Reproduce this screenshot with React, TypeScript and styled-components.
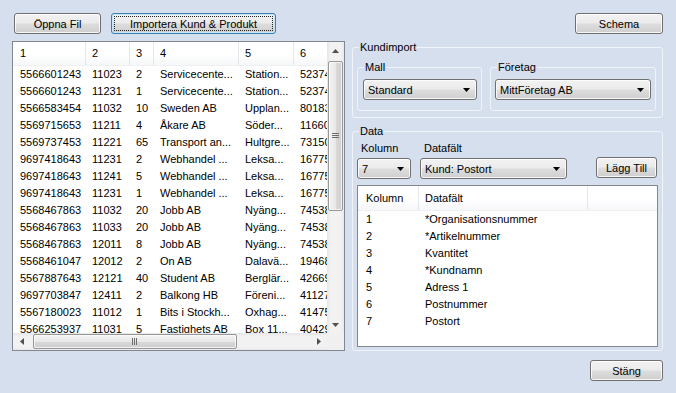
import React from "react";
import styled, { createGlobalStyle, css } from "styled-components";

const GlobalStyle = createGlobalStyle`
  html, body {
    margin: 0;
    padding: 0;
    background: #d6dfee;
  }
  body {
    font-family: "Liberation Sans", Arial, sans-serif;
    font-size: 11px;
    color: #000;
  }
  * {
    box-sizing: border-box;
  }
`;

type Col = { w?: number; pad?: number };

const importCols: Col[] = [{ w: 73, pad: 7 }, { w: 44 }, { w: 24 }, { w: 85 }, { w: 55 }, { w: 60 }];

const importRows = [
  ["5566601243", "11023", "2", "Servicecente...", "Station...", "52374"],
  ["5566601243", "11231", "1", "Servicecente...", "Station...", "52374"],
  ["5566583454", "11032", "10", "Sweden AB", "Upplan...", "80183"],
  ["5569715653", "11211", "4", "Åkare AB", "Söder...", "11660"],
  ["5569737453", "11221", "65", "Transport an...", "Hultgre...", "73150"],
  ["9697418643", "11231", "2", "Webhandel ...", "Leksa...", "16775"],
  ["9697418643", "11241", "5", "Webhandel ...", "Leksa...", "16775"],
  ["9697418643", "11231", "1", "Webhandel ...", "Leksa...", "16775"],
  ["5568467863", "11032", "20", "Jobb AB", "Nyäng...", "74538"],
  ["5568467863", "11033", "20", "Jobb AB", "Nyäng...", "74538"],
  ["5568467863", "12011", "8", "Jobb AB", "Nyäng...", "74538"],
  ["5568461047", "12012", "2", "On AB", "Dalavä...", "19468"],
  ["5567887643", "12121", "40", "Student AB", "Berglär...", "42669"],
  ["9697703847", "12411", "2", "Balkong HB", "Föreni...", "41127"],
  ["5567180023", "11012", "1", "Bits i Stockh...", "Oxhag...", "41475"],
  ["5566253937", "11031", "5", "Fastighets AB", "Box 11...", "40429"],
];

const mapCols: Col[] = [{ w: 61, pad: 8 }, { w: 169 }, {}];

const mapRows = [
  ["1", "*Organisationsnummer"],
  ["2", "*Artikelnummer"],
  ["3", "Kvantitet"],
  ["4", "*Kundnamn"],
  ["5", "Adress 1"],
  ["6", "Postnummer"],
  ["7", "Postort"],
];

const Arrow = ({ dir }: { dir: "up" | "down" | "left" | "right" }) => {
  const d = {
    up: "M0 4 L3.5 0 L7 4 Z",
    down: "M0 0 L7 0 L3.5 4 Z",
    left: "M4 0 L4 7 L0 3.5 Z",
    right: "M0 0 L4 3.5 L0 7 Z",
  }[dir];
  const vert = dir === "up" || dir === "down";
  return (
    <svg width={vert ? 7 : 4} height={vert ? 4 : 7} viewBox={vert ? "0 0 7 4" : "0 0 4 7"}>
      <path d={d} fill="#505050" />
    </svg>
  );
};

const ComboArrow = () => (
  <svg width="7" height="4" viewBox="0 0 7 4">
    <path d="M0 0 L7 0 L3.5 4 Z" fill="#000" />
  </svg>
);

const Grip = ({ vertical }: { vertical?: boolean }) =>
  vertical ? (
    <svg width="7" height="6" viewBox="0 0 7 6">
      <path d="M0 0.5 H7 M0 2.5 H7 M0 4.5 H7" stroke="#6d6d6d" strokeWidth="1" />
    </svg>
  ) : (
    <svg width="6" height="7" viewBox="0 0 6 7">
      <path d="M0.5 0 V7 M2.5 0 V7 M4.5 0 V7" stroke="#6d6d6d" strokeWidth="1" />
    </svg>
  );

export default function App() {
  return (
    <>
      <GlobalStyle />
      <Window>
        <TopBar>
          <Button $w={87}>Öppna Fil</Button>
          <Button $w={165} $focused>
            Importera Kund &amp; Produkt
          </Button>
          <Spacer />
          <Button $w={88}>Schema</Button>
        </TopBar>

        <Body>
          <ListFrame $w={333} $h={310}>
            <Viewport>
              <HeaderRow $h={24}>
                {importCols.map((c, i) => (
                  <HeaderCell key={i} $w={c.w} $pad={c.pad}>
                    {i + 1}
                  </HeaderCell>
                ))}
              </HeaderRow>
              {importRows.map((r, i) => (
                <Row key={i}>
                  {r.map((v, j) => (
                    <Cell key={j} $w={importCols[j].w} $pad={importCols[j].pad}>
                      {v}
                    </Cell>
                  ))}
                </Row>
              ))}
            </Viewport>
            <VScroll>
              <ArrowBox>
                <Arrow dir="up" />
              </ArrowBox>
              <Track $vertical>
                <Thumb $vertical $offset={2} $len={150}>
                  <Grip vertical />
                </Thumb>
              </Track>
              <ArrowBox>
                <Arrow dir="down" />
              </ArrowBox>
            </VScroll>
            <HScroll>
              <ArrowBox>
                <Arrow dir="left" />
              </ArrowBox>
              <Track>
                <Thumb $offset={3} $len={204}>
                  <Grip />
                </Thumb>
              </Track>
              <ArrowBox>
                <Arrow dir="right" />
              </ArrowBox>
            </HScroll>
            <Corner />
          </ListFrame>

          <Side>
            <Group $w={311} $h={77}>
              <GroupTitle>Kundimport</GroupTitle>
              <GroupBody $pad="7px 6px 0 4px" $row>
                <Group $w={125} $h={50}>
                  <GroupTitle>Mall</GroupTitle>
                  <GroupBody $pad="5px 0 0 5px">
                    <Combo $w={114}>
                      Standard
                      <ComboArrow />
                    </Combo>
                  </GroupBody>
                </Group>
                <Group $w={166} $h={50}>
                  <GroupTitle>Företag</GroupTitle>
                  <GroupBody $pad="5px 0 0 4px">
                    <Combo $w={156}>
                      MittFöretag AB
                      <ComboArrow />
                    </Combo>
                  </GroupBody>
                </Group>
              </GroupBody>
            </Group>

            <Group $w={311} $h={226}>
              <GroupTitle>Data</GroupTitle>
              <GroupBody $pad="4px 5px 3px 4px">
                <Controls>
                  <Field>
                    <FieldLabel>Kolumn</FieldLabel>
                    <Combo $w={54}>
                      7
                      <ComboArrow />
                    </Combo>
                  </Field>
                  <Field>
                    <FieldLabel>Datafält</FieldLabel>
                    <Combo $w={147}>
                      Kund: Postort
                      <ComboArrow />
                    </Combo>
                  </Field>
                  <AddButton $w={73}>Lägg Till</AddButton>
                </Controls>
                <MapList>
                  <HeaderRow $h={25}>
                    <HeaderCell $w={mapCols[0].w} $pad={mapCols[0].pad}>
                      Kolumn
                    </HeaderCell>
                    <HeaderCell $w={mapCols[1].w}>Datafält</HeaderCell>
                    <HeaderCell $fill />
                  </HeaderRow>
                  {mapRows.map((r, i) => (
                    <Row key={i}>
                      <Cell $w={mapCols[0].w} $pad={mapCols[0].pad}>
                        {r[0]}
                      </Cell>
                      <Cell $w={mapCols[1].w}>{r[1]}</Cell>
                    </Row>
                  ))}
                </MapList>
              </GroupBody>
            </Group>
          </Side>
        </Body>

        <BottomBar>
          <Button $w={73}>Stäng</Button>
        </BottomBar>
      </Window>
    </>
  );
}

const Window = styled.div`
  width: 676px;
  height: 393px;
  padding: 13px 13px 0 12px;
  display: flex;
  flex-direction: column;
  background: #d6dfee;
  overflow: hidden;
`;

const TopBar = styled.div`
  display: flex;
  align-items: center;
  gap: 10px;
  height: 21px;
  padding-left: 2px;
  margin-bottom: 7px;
`;

const Spacer = styled.div`
  flex: 1;
`;

const buttonFace = css`
  background: linear-gradient(to bottom, #f2f2f2 0%, #ebebeb 48%, #dddddd 52%, #cfcfcf 100%);
  border: 1px solid #707070;
  border-radius: 3px;
  box-shadow: inset 0 0 0 1px rgba(255, 255, 255, 0.8);
`;

const Button = styled.button<{ $w: number; $focused?: boolean }>`
  ${buttonFace}
  position: relative;
  width: ${(p) => p.$w}px;
  height: 21px;
  padding: 0;
  font: inherit;
  color: #000;
  cursor: default;

  ${(p) =>
    p.$focused &&
    css`
      border-color: #3c7fb1;
      box-shadow: inset 0 0 0 1px #c5e6f7;

      &::after {
        content: "";
        position: absolute;
        inset: 2px;
        border: 1px dotted #222;
      }
    `}
`;

const AddButton = styled(Button)`
  margin-left: 20px;
  margin-bottom: 1px;
`;

const Body = styled.div`
  display: flex;
  gap: 7px;
  height: 310px;
`;

const ListFrame = styled.div<{ $w: number; $h: number }>`
  width: ${(p) => p.$w}px;
  height: ${(p) => p.$h}px;
  border: 1px solid #828790;
  background: #fff;
  display: grid;
  grid-template-columns: minmax(0, 1fr) 17px;
  grid-template-rows: minmax(0, 1fr) 17px;
  overflow: hidden;
`;

const Viewport = styled.div`
  overflow: hidden;
  min-width: 0;
`;

const HeaderRow = styled.div<{ $h: number }>`
  display: flex;
  height: ${(p) => p.$h}px;
  line-height: ${(p) => p.$h - 1}px;
  background: linear-gradient(to bottom, #ffffff 0%, #ffffff 55%, #f6f7f9 100%);
  border-bottom: 1px solid #eef0f2;
`;

const HeaderCell = styled.div<{ $w?: number; $pad?: number; $fill?: boolean }>`
  flex: ${(p) => (p.$fill ? "1 1 auto" : `0 0 ${p.$w}px`)};
  padding-left: ${(p) => p.$pad ?? 6}px;
  white-space: nowrap;
  overflow: hidden;
  border-right: ${(p) => (p.$fill ? "none" : "1px solid #e3e6ea")};
`;

const Row = styled.div`
  display: flex;
  height: 17px;
  line-height: 17px;
`;

const Cell = styled.div<{ $w?: number; $pad?: number }>`
  flex: 0 0 ${(p) => p.$w ?? 60}px;
  padding-left: ${(p) => p.$pad ?? 6}px;
  white-space: nowrap;
  overflow: hidden;
`;

const VScroll = styled.div`
  display: flex;
  flex-direction: column;
  background: linear-gradient(to right, #e6e6e6 0%, #f2f2f2 20%, #f2f2f2 80%, #eaeaea 100%);
`;

const HScroll = styled.div`
  display: flex;
  background: linear-gradient(to bottom, #e6e6e6 0%, #f2f2f2 20%, #f2f2f2 80%, #eaeaea 100%);
`;

const ArrowBox = styled.div`
  flex: 0 0 17px;
  display: flex;
  align-items: center;
  justify-content: center;
`;

const Track = styled.div<{ $vertical?: boolean }>`
  flex: 1;
  display: flex;
  flex-direction: ${(p) => (p.$vertical ? "column" : "row")};
  padding: ${(p) => (p.$vertical ? "0 1px" : "1px 0")};
`;

const Thumb = styled.div<{ $vertical?: boolean; $offset: number; $len: number }>`
  display: flex;
  align-items: center;
  justify-content: center;
  border: 1px solid #979797;
  border-radius: 2px;
  ${(p) =>
    p.$vertical
      ? css`
          margin-top: ${p.$offset}px;
          height: ${p.$len}px;
          background: linear-gradient(to right, #f3f3f3 0%, #e8e8e8 50%, #d9d9d9 51%, #cecece 100%);
        `
      : css`
          margin-left: ${p.$offset}px;
          width: ${p.$len}px;
          background: linear-gradient(to bottom, #f3f3f3 0%, #e8e8e8 50%, #d9d9d9 51%, #cecece 100%);
        `}
  box-shadow: inset 0 0 0 1px rgba(255, 255, 255, 0.7);
`;

const Corner = styled.div`
  background: #f0f0f0;
`;

const Side = styled.div`
  display: flex;
  flex-direction: column;
  gap: 7px;
`;

const Group = styled.fieldset<{ $w: number; $h: number }>`
  width: ${(p) => p.$w}px;
  height: ${(p) => p.$h}px;
  margin: 0;
  padding: 0;
  min-width: 0;
  border: 1px solid #f0f4fa;
  border-radius: 3px;
`;

const GroupTitle = styled.legend`
  margin-left: 6px;
  padding: 0 1px;
  font-size: 11px;
  line-height: 13px;
`;

const GroupBody = styled.div<{ $pad: string; $row?: boolean }>`
  display: flex;
  flex-direction: ${(p) => (p.$row ? "row" : "column")};
  gap: ${(p) => (p.$row ? "8px" : "0")};
  padding: ${(p) => p.$pad};
`;

const Combo = styled.div<{ $w: number }>`
  ${buttonFace}
  width: ${(p) => p.$w}px;
  height: 21px;
  display: flex;
  align-items: center;
  justify-content: space-between;
  padding: 0 6px 0 4px;
  white-space: nowrap;
`;

const Controls = styled.div`
  display: flex;
  align-items: flex-end;
  gap: 9px;
`;

const Field = styled.div`
  display: flex;
  flex-direction: column;
  gap: 3px;
`;

const FieldLabel = styled.div`
  padding-left: 4px;
  line-height: 13px;
`;

const MapList = styled.div`
  margin-top: 6px;
  width: 301px;
  height: 162px;
  border: 1px solid #828790;
  background: #fff;
  overflow: hidden;
`;

const BottomBar = styled.div`
  display: flex;
  justify-content: flex-end;
  margin-top: 9px;
`;
